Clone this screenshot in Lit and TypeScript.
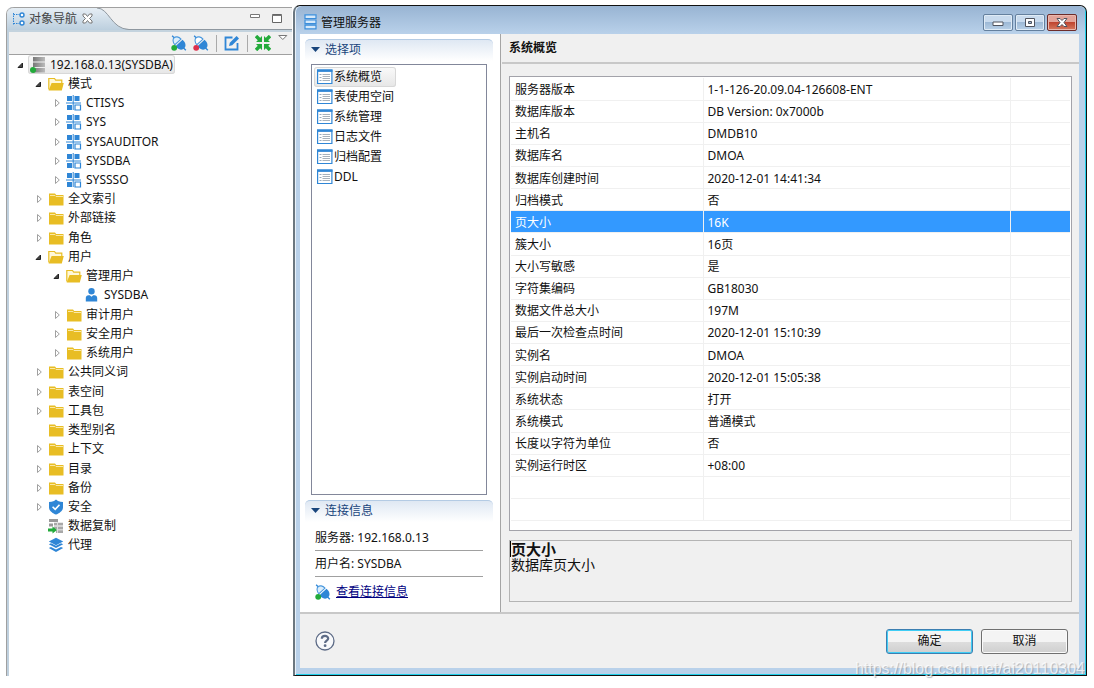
import { LitElement, html, svg, css, nothing } from "lit";
import { customElement, property, state } from "lit/decorators.js";
import { classMap } from "lit/directives/class-map.js";

const plug = (dot: string, outline: boolean) => svg`
  <g transform="rotate(47 8 8)">
    <path d="M-2 8H1M15 8h3" stroke="#2f86d6" stroke-width="1.400"/>
    <path d="M6.500 3.800C3 3.800.8 6 .8 8s2.200 4.200 5.700 4.200z" fill="${outline ? "#fff" : "#dceefb"}" stroke="#4a98de" stroke-width="1.100"/>
    <path d="M8 3.200h1.800c3.700 0 5.800 2.600 5.800 4.800s-2.100 4.800-5.800 4.800H8z" fill="#2f86d6"/>
  </g>
  <circle cx="3.200" cy="12.800" r="2.900" fill="${dot}"/>`;

const ICONS: Record<string, unknown> = {
  nav: svg`<path d="M2.500 2v11.500M2.500 3.500h6M2.500 12.500h6" stroke="#2f86d6" stroke-dasharray="1.500 1" fill="none"/>
    <circle cx="11" cy="4" r="2" fill="#fff" stroke="#2f86d6" stroke-width="1.400"/>
    <circle cx="11" cy="12" r="2" fill="#fff" stroke="#2f86d6" stroke-width="1.400"/>`,
  server: svg`<defs><linearGradient id="g"><stop offset="0" stop-color="#777"/><stop offset="1" stop-color="#bbb"/></linearGradient></defs>
    <path d="M3 0h12v4.500H3zM3 5.500h12V10H3zM3 11h12v4.500H3z" fill="url(#g)"/><circle cx="3" cy="13" r="3" fill="#22aa3a"/>`,
  schema: svg`<path d="M1 1h5v5H1zM8.500 1h5v5h-5zM1 10h5v5H1z" fill="#2f86d6"/><path d="M0 8h15M7.200 0v15" stroke="#2f86d6"/>
    <path d="M9 10h5.500v5H9z" fill="#fff" stroke="#2f86d6" stroke-width="1.200"/>`,
  folder: svg`<path d="M1 2.500h6l1.200 1.500H15.500V14.500H1z" fill="#e8bd24"/><path d="M2 4.500h5l1 1h7" stroke="#fbe9a6" fill="none"/>`,
  open: svg`<path d="M.8 13.500V2.500h5.700l1.200 1.700h6.100v3" fill="#fff8d8" stroke="#e8bd24" stroke-width="1.200"/>
    <path d="M3.600 7H15.800L13.800 14.500H.6z" fill="#e8bd24"/>`,
  user: svg`<circle cx="7.500" cy="4.300" r="3.200" fill="#2f86d6"/><path d="M1.800 14.500V11c0-1.700 1-2.800 2.800-2.800h1.200l1.700 1.500 1.700-1.500h1.200c1.800 0 2.800 1.100 2.800 2.800v3.500z" fill="#2f86d6"/>`,
  shield: svg`<path d="M8 .6 10 2q2.500 1 5 1v5.500C15 12 11 14.500 8 15.600 5 14.500 1 12 1 8.500V3q2.500 0 5-1z" fill="#2f86d6"/>
    <path d="m4.600 7.800 2.600 2.600 4.300-4.600" stroke="#fff" stroke-width="1.600" fill="none"/>`,
  copy: svg`<path d="M1 1h9v3H1zM1 5.500h4v3H1z" fill="#999"/><path d="M6 4.800h9v2.800H6zM6 8.600h9v2.800H6zM8 12.300h7v2.800H8z" fill="#a8a8a8"/>
    <path d="M9.500 4v11" stroke="#ddd"/><path d="M0 10.500h4.500V8.500L9 12l-4.500 3.500v-2H0z" fill="#22aa3a"/>`,
  layers: svg`<path d="M8 .8 15.200 4.500 8 8.200.8 4.500z" fill="#2f86d6"/>
    <path d="M.8 7.200 3 6.200l5 2.600 5-2.600 2.200 1L8 11zM.8 11 3 10l5 2.600L13 10l2.200 1L8 15z" fill="#2f86d6"/>`,
  list: svg`<path d="M.6 1h14.300v13.500H.6z" fill="#fff" stroke="#2f86d6" stroke-width="1.200"/><path d="M0 1.700h15.500" stroke="#2f86d6" stroke-width="2.400"/>
    <path d="M2.500 5.500h2M2.500 8.500h2M2.500 11.500h2" stroke="#9ab"/><path d="M5.500 5.500h7.500M5.500 7.500h7.500M5.500 9.500h7.500M5.500 11.500h7.500" stroke="#a8b2bc"/>`,
  connect: plug("#22aa3a", false),
  disconnect: plug("#dc2f4c", true),
  edit: svg`<path d="M8.500 2.500H1.500v12h12V8" fill="none" stroke="#2f86d6" stroke-width="1.800"/>
    <path d="m5 11 .8-3.200L12.600 1l2.400 2.400-6.800 6.800z" fill="#2f86d6"/>`,
  collapse: svg`<path d="M1 1l5 5M15 1l-5 5M1 15l5-5M15 15l-5-5" stroke="#22aa3a" stroke-width="3.400"/>
    <path d="M7 1v6H1zM9 1v6h6zM7 15V9H1zM9 15V9h6z" fill="#22aa3a"/>`,
  rack: svg`<path d="M2 .8h11v3.700H2zM2 6h11v3.700H2zM2 11.200h11v3.700H2z" fill="#d5e9fa" stroke="#3b8edb" stroke-width="1.200"/>`,
};
const icon = (name: string) => html`<svg class="icon" width="16" height="16" viewBox="0 0 16 16" fill="none" aria-hidden="true">${ICONS[name]}</svg>`;

const iconStyles = css`
  .icon { display: block; flex: none; }
`;

type Node = [level: number, icon: string, label: string, fold: "open" | "closed" | ""];
const NODES: Node[] = [
  [0, "server", "192.168.0.13(SYSDBA)", "open"],
  [1, "open", "模式", "open"],
  [2, "schema", "CTISYS", "closed"],
  [2, "schema", "SYS", "closed"],
  [2, "schema", "SYSAUDITOR", "closed"],
  [2, "schema", "SYSDBA", "closed"],
  [2, "schema", "SYSSSO", "closed"],
  [1, "folder", "全文索引", "closed"],
  [1, "folder", "外部链接", "closed"],
  [1, "folder", "角色", "closed"],
  [1, "open", "用户", "open"],
  [2, "open", "管理用户", "open"],
  [3, "user", "SYSDBA", ""],
  [2, "folder", "审计用户", "closed"],
  [2, "folder", "安全用户", "closed"],
  [2, "folder", "系统用户", "closed"],
  [1, "folder", "公共同义词", "closed"],
  [1, "folder", "表空间", "closed"],
  [1, "folder", "工具包", "closed"],
  [1, "folder", "类型别名", ""],
  [1, "folder", "上下文", "closed"],
  [1, "folder", "目录", "closed"],
  [1, "folder", "备份", "closed"],
  [1, "shield", "安全", "closed"],
  [1, "copy", "数据复制", ""],
  [1, "layers", "代理", ""],
];

@customElement("object-navigator")
export class ObjectNavigator extends LitElement {
  static styles = [iconStyles, css`
    :host { display: flex; flex-direction: column; box-sizing: border-box; background: #fff; border-left: 1px solid #a0a0a0; box-shadow: inset 2px 0 #bfd0de; padding-left: 2px; border-radius: 7px 0 0 0; }
    button { font: inherit; color: inherit; background: none; border: 0; padding: 0; display: block; }
    .tabs { position: relative; display: flex; height: 21px; align-items: center; background: #f0f0f0; border-top: 1px solid #a0a0a0; border-bottom: 1px solid #8e979f; border-radius: 7px 0 0 0; margin-left: -2px; box-sizing: content-box; }
    .shape { position: absolute; left: 0; top: 0; }
    .tab { position: relative; display: flex; align-items: center; gap: 2px; padding-left: 4px; color: #444; }
    .close { padding-left: 3px; }
    .window { position: relative; display: flex; gap: 11px; margin-left: auto; padding-right: 9px; }
    .tools { display: flex; align-items: center; height: 22px; padding-right: 4px; justify-content: flex-end; background: #f0f0f0; border-top: 2px solid #c4d3de; border-bottom: 1px solid #a0a0a0; gap: 7px; }
    .links { display: flex; gap: 6px; }
    .rule { width: 1px; height: 17px; background: #aaa; }
    .more { align-self: flex-start; padding-top: 3px; }
    .tree { list-style: none; margin: 0; padding: 0 0 0 5px; min-height: 500px; display: flex; flex-direction: column; }
    .node { flex: 1; display: flex; align-items: center; }
    .level1 { padding-left: 18px; }
    .level2 { padding-left: 36px; }
    .level3 { padding-left: 54px; }
    .fold { width: 14px; height: 14px; flex: none; }
    .label { display: flex; align-items: center; gap: 4px; padding: 0 2px; height: 19px; box-sizing: border-box; white-space: nowrap; }
    .selected { background: linear-gradient(#fafafa, #e6e6e6); box-shadow: inset 0 0 0 1px #d8d8d8; border-radius: 3px; }
  `];

  render() {
    return html`
      <header class="tabs">
        <svg class="shape" width="130" height="22" viewBox="0 0 130 22" aria-hidden="true">
          <defs><linearGradient id="tab" x2="0" y2="1"><stop offset="0" stop-color="#e6eef5"/><stop offset="1" stop-color="#bccfde"/></linearGradient></defs>
          <path d="M0 22V7Q0 0 7 0H90C102 0 104 21 122 21.500V22z" fill="url(#tab)"/>
          <path d="M90 0C102 0 104 21 122 21.500" fill="none" stroke="#8e979f"/>
        </svg>
        <div class="tab">${icon("nav")}<span>对象导航</span>
          <button class="close" aria-label="关闭"><svg class="icon" width="11" height="11" viewBox="0 0 11 11"><path d="M1 1h2.500l2 2.500L7.500 1H10v2L7.500 5.500 10 8v2H7.500l-2-2.500-2 2.500H1V8l2.500-2.500L1 3z" fill="#fff" stroke="#777"/></svg></button>
        </div>
        <div class="window">
          <button aria-label="最小化"><svg class="icon" width="11" height="12"><path d="M.5 1.500h9v3H.5z" fill="#fff" stroke="#777"/></svg></button>
          <button aria-label="最大化"><svg class="icon" width="11" height="12"><path d="M.5 1.500h9v8h-9z" fill="#fff" stroke="#666"/><path d="M0 2.500h10" stroke="#777"/></svg></button>
        </div>
      </header>
      <div class="tools">
        <div class="links">
          <button aria-label="连接">${icon("connect")}</button>
          <button aria-label="断开">${icon("disconnect")}</button>
        </div>
        <span class="rule"></span>
        <button aria-label="编辑">${icon("edit")}</button>
        <span class="rule"></span>
        <button aria-label="全部折叠">${icon("collapse")}</button>
        <button class="more" aria-label="菜单"><svg class="icon" width="10" height="6"><path d="M.8.5h8L4.800 4.500z" fill="#fff" stroke="#777"/></svg></button>
      </div>
      <ul class="tree" role="tree">
        ${NODES.map(([level, name, label, fold], i) => html`
          <li class="node level${level}" role="treeitem" aria-level=${level + 1} aria-expanded=${fold ? String(fold === "open") : nothing}>
            <svg class="fold" viewBox="0 0 14 14" aria-hidden="true">
              ${fold === "open" ? svg`<path d="M8.500 5v4.500H4z" fill="#444" stroke="#222"/>` : nothing}
              ${fold === "closed" ? svg`<path d="M5.500 3.500v7L9.300 7z" fill="#fff" stroke="#a0a0a0"/>` : nothing}
            </svg>
            <span class="label ${classMap({ selected: i === 0 })}">${icon(name)}<span>${label}</span></span>
          </li>`)}
      </ul>`;
  }
}

@customElement("info-section")
export class InfoSection extends LitElement {
  @property() heading = "";
  static styles = css`
    :host { display: block; }
    .head { display: flex; align-items: center; gap: 5px; height: 22px; padding: 0 0 1px 6px; margin: 0; font-size: 12px; font-weight: 400; color: #19457c; box-sizing: border-box; border-top: 1px solid #b4cbe4; border-radius: 5px 5px 0 0; background: linear-gradient(#dfe8f3, #fff); }
  `;
  render() {
    return html`<h2 class="head"><svg width="9" height="6" aria-hidden="true"><path d="M0 0h9L4.500 5z" fill="#19457c"/></svg>${this.heading}</h2><slot></slot>`;
  }
}

const PAGES = ["系统概览", "表使用空间", "系统管理", "日志文件", "归档配置", "DDL"];
const ROWS = [
  ["服务器版本", "1-1-126-20.09.04-126608-ENT"],
  ["数据库版本", "DB Version: 0x7000b"],
  ["主机名", "DMDB10"],
  ["数据库名", "DMOA"],
  ["数据库创建时间", "2020-12-01 14:41:34"],
  ["归档模式", "否"],
  ["页大小", "16K"],
  ["簇大小", "16页"],
  ["大小写敏感", "是"],
  ["字符集编码", "GB18030"],
  ["数据文件总大小", "197M"],
  ["最后一次检查点时间", "2020-12-01 15:10:39"],
  ["实例名", "DMOA"],
  ["实例启动时间", "2020-12-01 15:05:38"],
  ["系统状态", "打开"],
  ["系统模式", "普通模式"],
  ["长度以字符为单位", "否"],
  ["实例运行时区", "+08:00"],
  ["", ""],
  ["", ""],
];

@customElement("server-dialog")
export class ServerDialog extends LitElement {
  @state() private page = 0;
  @state() private row = 6;

  static styles = [iconStyles, css`
    :host { display: flex; flex-direction: column; box-sizing: border-box; border: solid #111; border-width: 1px 1px 1px 2px; border-left-color: #6b7780; border-radius: 7px 7px 0 0; background: #b9d1ea; box-shadow: inset 1px 1px #e9f2fa, inset -1px -1px #1fd0ea; padding: 0 7px 7px 5px; }
    button { font: inherit; color: inherit; }
    .title { display: flex; align-items: center; height: 28px; margin: 0 -6px 0 -4px; padding: 0 8px 0 7px; background: linear-gradient(#98b4d3, #b9d1ea); border-radius: 6px 6px 0 0; gap: 2px; }
    .caption { flex: 1; margin: 0; font-size: 12px; font-weight: 400; padding-top: 5px; }
    .title .icon { margin-top: 3px; }
    .controls { display: flex; gap: 2px; align-self: flex-start; padding-top: 8px; }
    .title .control { width: 30px; height: 17px; padding: 0; display: grid; place-items: center; border: 1px solid #64809e; border-radius: 2px; background: linear-gradient(#c9dbee 50%, #9db9d6 50%, #b9d1e8); box-shadow: inset 0 0 0 1px #dfebf6; }
    .title .control .icon { margin: 0; }
    .title .exit { border-color: #6d2c2a; background: linear-gradient(#e2a399 45%, #bf4530 50%, #d67a60); box-shadow: inset 0 0 0 1px #eab8ae; }
    .body { flex: 1; display: flex; min-height: 0; background: #f0f0f0; }
    .side { flex: none; width: 201px; box-sizing: border-box; background: #fff; border-right: 1px solid #a5a5a5; padding: 5px 7px 5px 5px; display: flex; flex-direction: column; gap: 5px; }
    .choices { flex: 1; display: flex; flex-direction: column; }
    .pages { list-style: none; margin: 3px 6px 0; padding: 2px; border: 1px solid #82879a; box-sizing: border-box; height: 431px; }
    .page { display: flex; align-items: center; gap: 1px; height: 20px; width: 82px; padding: 0 3px; border: 0; background: none; white-space: nowrap; border-radius: 3px; }
    .current { background: linear-gradient(#fafafa, #e6e6e6); box-shadow: inset 0 0 0 1px #d8d8d8; }
    .facts { margin: 3px 10px 0; }
    .fact { margin: 0; height: 25px; line-height: 26px; border-bottom: 1px solid #a0a0a0; }
    .link { display: flex; align-items: center; gap: 5px; height: 30px; color: #00007f; }
    .main { flex: 1; min-width: 0; display: flex; flex-direction: column; }
    .heading { margin: 0 0 0 1px; padding-left: 7px; height: 28px; line-height: 28px; font-size: 12px; border-bottom: 2px solid #c8c8c8; }
    .content { flex: 1; display: flex; flex-direction: column; gap: 9px; padding: 12px 7px 10px 8px; }
    .frame { flex: 1; background: #fff; border: 1px solid #a3a3aa; padding: 1px; }
    .grid { width: 100%; height: 443px; border-collapse: collapse; table-layout: fixed; }
    .grid tr { height: 22px; }
    .grid td { padding: 2px 4px 0; border-bottom: 1px solid #f0f0f0; border-right: 1px solid #f0f0f0; white-space: nowrap; line-height: 18px; }
    .grid td:last-child { border-right: 0; }
    .name { width: 192px; }
    .value { width: 55%; }
    .grid .active td { background: #3399ff; color: #fff; }
    .note { box-sizing: border-box; height: 62px; border: 1px solid #b4b4b4; padding: 0 1px; font-size: 14px; }
    .note p { margin: 0; line-height: 16px; height: 16px; }
    .note .term { font-weight: 700; font-size: 15px; box-shadow: -1px 0 #000; }
    .footer { display: flex; align-items: center; gap: 8px; height: 54px; padding: 0 11px 0 15px; background: #f0f0f0; border-top: 2px solid #c8c8c8; }
    .help { margin-right: auto; padding: 0; border: 0; background: none; }
    .action { width: 87px; height: 25px; padding: 0; border: 1px solid #707070; border-radius: 3px; background: linear-gradient(#f4f4f4 50%, #dedede 50%, #cfcfcf); box-shadow: inset 0 0 0 1px #fafafa; }
    .default { border-color: #3c7fb1; box-shadow: inset 0 0 0 1px #3fcdf5; }
  `];

  render() {
    return html`
      <header class="title">
        ${icon("rack")}<h1 class="caption">管理服务器</h1>
        <div class="controls">
          <button class="control" aria-label="最小化"><svg class="icon" width="12" height="11"><path d="M1 5h10v3.500H1z" fill="#fff" stroke="#50545f"/></svg></button>
          <button class="control" aria-label="最大化"><svg class="icon" width="12" height="11"><path d="M1.500 1.500h9v8h-9z" fill="#fff" stroke="#50545f"/><path d="M4.500 4.500h3v2h-3z" fill="#9db9d6" stroke="#50545f"/></svg></button>
          <button class="control exit" aria-label="关闭"><svg class="icon" width="12" height="11"><path d="M1 1.500h3l2 2 2-2h3L8 5.500l3 4H8l-2-2-2 2H1l3-4z" fill="#fff" stroke="#50545f"/></svg></button>
        </div>
      </header>
      <div class="body">
        <aside class="side">
          <info-section class="choices" heading="选择项">
            <ul class="pages">
              ${PAGES.map((p, i) => html`<li><button class="page ${classMap({ current: i === this.page })}" @click=${() => (this.page = i)}>${icon("list")}${p}</button></li>`)}
            </ul>
          </info-section>
          <info-section heading="连接信息">
            <div class="facts">
              <p class="fact">服务器: 192.168.0.13</p>
              <p class="fact">用户名: SYSDBA</p>
              <a class="link" href="#connection">${icon("connect")}查看连接信息</a>
            </div>
          </info-section>
        </aside>
        <main class="main">
          <h2 class="heading">系统概览</h2>
          <div class="content">
            <div class="frame">
              <table class="grid">
                <colgroup><col class="name"><col class="value"><col></colgroup>
                <tbody>
                  ${ROWS.map(([k, v], i) => html`<tr class=${classMap({ active: i === this.row })} @click=${() => (this.row = i)}><td>${k}</td><td>${v}</td><td></td></tr>`)}
                </tbody>
              </table>
            </div>
            <div class="note"><p class="term">页大小</p><p>数据库页大小</p></div>
          </div>
        </main>
      </div>
      <footer class="footer">
        <button class="help" aria-label="帮助"><svg class="icon" width="20" height="20" viewBox="0 0 20 20" fill="none"><circle cx="10" cy="10" r="9" fill="#f8f9fb" stroke="#5d6b86" stroke-width="1.300"/><path d="M6.800 7.700C6.800 4 13.200 4 13.200 7.500c0 2.200-3.100 2.200-3.100 4.600" stroke="#5d6b86" stroke-width="2.200"/><circle cx="10.100" cy="14.700" r="1.400" fill="#5d6b86"/></svg></button>
        <button class="action default">确定</button>
        <button class="action">取消</button>
      </footer>`;
  }
}

@customElement("app-root")
export class AppRoot extends LitElement {
  static styles = css`
    :host { position: relative; display: flex; box-sizing: border-box; min-height: 100vh; padding: 5px 7px 12px 6px; background: #fff; color: #111; font: 12px/16px "Noto Sans", "Noto Sans CJK SC", sans-serif; }
    .nav { flex: none; width: 286px; margin: 2px 1px 0 0; }
    .dialog { flex: 1; min-width: 0; }
    .mark { position: absolute; right: 9px; bottom: 9px; font: 16px/20px "Liberation Sans", sans-serif; color: rgba(255, 255, 255, 0.75); text-shadow: 1px 1px 1px rgba(110, 120, 130, 0.5); }
  `;
  render() {
    return html`
      <object-navigator class="nav"></object-navigator>
      <server-dialog class="dialog"></server-dialog>
      <span class="mark">https://blog.csdn.net/ai20110304</span>`;
  }
}
